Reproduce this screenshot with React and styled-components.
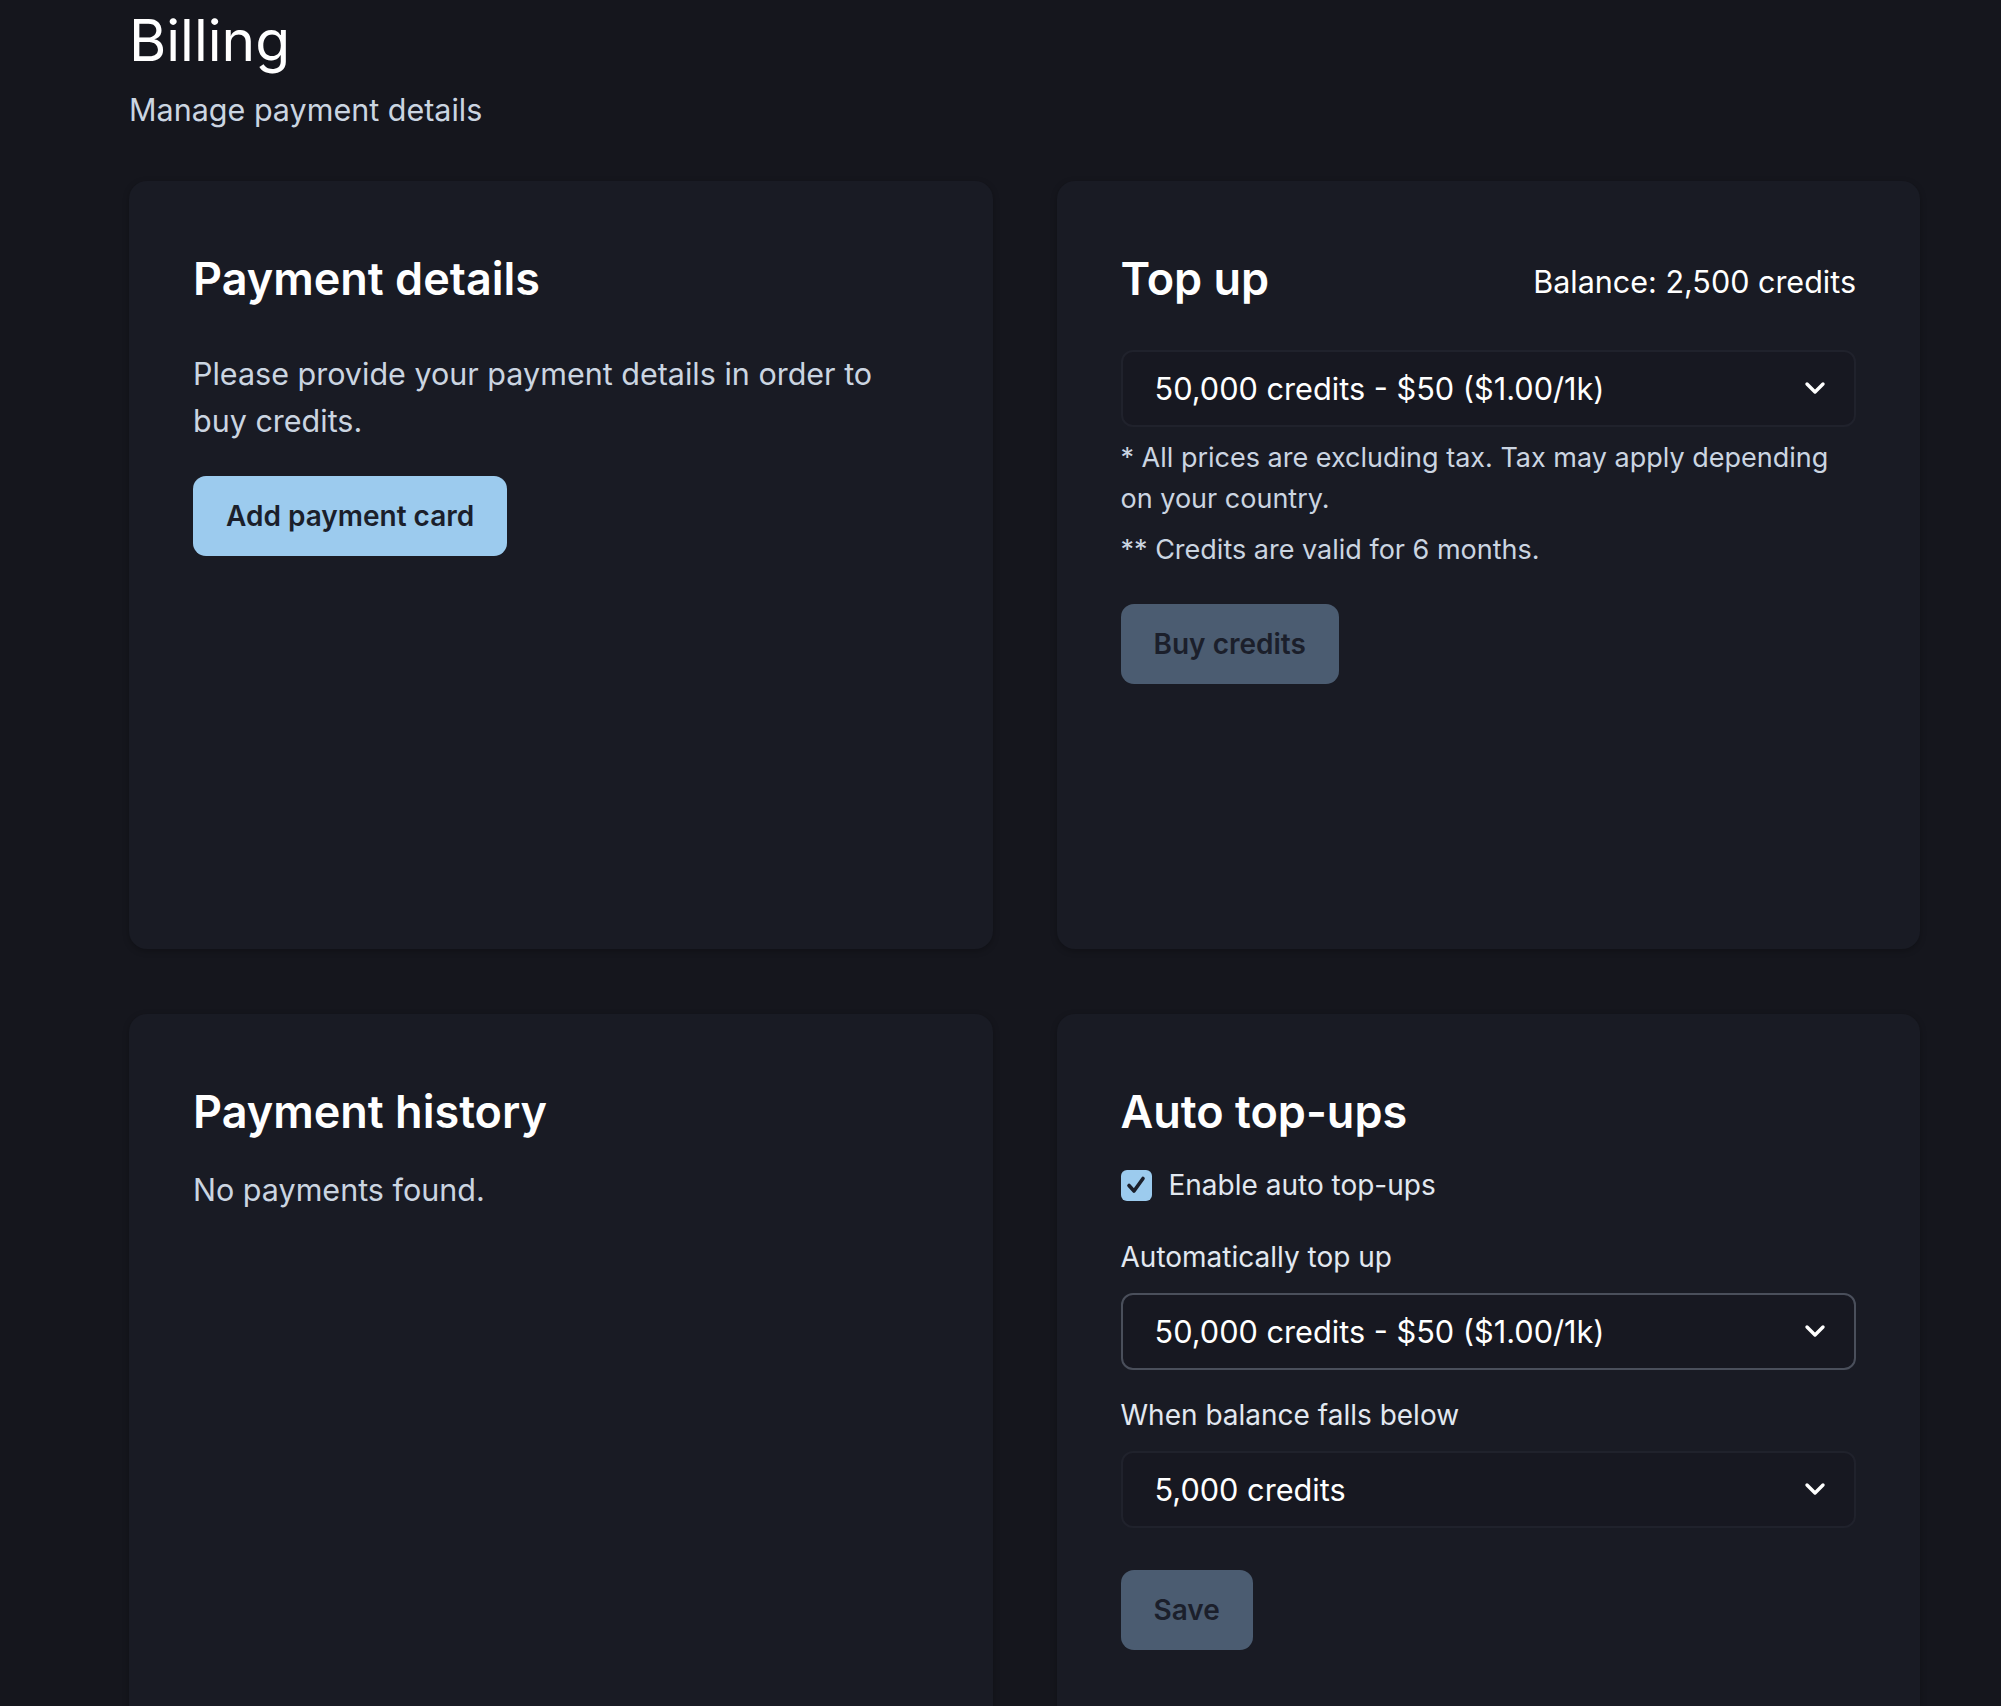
import React from 'react'
import styled, { createGlobalStyle } from 'styled-components'

const COLOR = {
  page: '#15161d',
  card: '#191b24',
  white: '#ffffff',
  text: '#cbd5e1',
  label: '#e2e8f0',
  primary: '#9ccbee',
  disabled: '#4b5c71',
  ink: '#1b1f2b',
}

const GlobalStyle = createGlobalStyle`
  html, body {
    margin: 0;
    background: ${COLOR.page};
    font-family: Inter, 'Noto Sans', sans-serif;
    -webkit-font-smoothing: antialiased;
  }
`

const Page = styled.div`
  padding: 12px 81px 0 129px;
`

const Title = styled.h1`
  margin: 0;
  color: ${COLOR.white};
  font-size: 57px;
  font-weight: 400;
  line-height: 58px;
`

const Subtitle = styled.p`
  margin: 18px 0 0;
  color: ${COLOR.text};
  font-size: 30.5px;
  line-height: 43px;
`

const Grid = styled.div`
  display: grid;
  grid-template-columns: 1fr 1fr;
  gap: 65px 64px;
  margin-top: 50px;
`

const Card = styled.section`
  background: ${COLOR.card};
  border-radius: 18px;
  padding: 64px;
  min-height: 768px;
  box-sizing: border-box;
  box-shadow: 0 2px 6px rgba(0, 0, 0, 0.25);
`

const CardHead = styled.div`
  display: flex;
  align-items: baseline;
  justify-content: space-between;
  margin-bottom: ${p => p.gap || 0}px;
`

const Heading = styled.h2`
  margin: 0;
  color: ${COLOR.white};
  font-size: 45px;
  font-weight: 600;
  line-height: 67.5px;
`

const Balance = styled.span`
  position: relative;
  top: -2px;
  color: ${COLOR.white};
  font-size: 30.5px;
  line-height: 40px;
`

const Text = styled.p`
  margin: 0;
  color: ${COLOR.text};
  font-size: 30.5px;
  line-height: 47px;
`

const Note = styled.p`
  margin: ${p => p.top || 0}px 0 0;
  color: ${COLOR.text};
  font-size: 27px;
  line-height: 41px;
`

const Button = styled.button`
  display: inline-flex;
  align-items: center;
  height: 80px;
  padding: 0 33px;
  margin-top: ${p => p.top || 0}px;
  border: none;
  border-radius: 13px;
  background: ${p => (p.disabled ? COLOR.disabled : COLOR.primary)};
  color: ${COLOR.ink};
  font-family: inherit;
  font-size: 28px;
  font-weight: 600;
  cursor: ${p => (p.disabled ? 'default' : 'pointer')};
`

const SelectBox = styled.div`
  display: flex;
  align-items: center;
  justify-content: space-between;
  height: 77px;
  box-sizing: border-box;
  padding: 0 28px 0 32px;
  border: 2px solid ${p => (p.active ? '#4a4f5b' : '#20222c')};
  border-radius: 12px;
  background: #171821;
  color: ${COLOR.white};
  font-size: 30.7px;
`

const Check = styled.label`
  display: flex;
  align-items: center;
  gap: 17px;
  margin-bottom: 31px;
  color: ${COLOR.label};
  font-size: 28px;
  line-height: 41px;
`

const Box = styled.span`
  display: flex;
  align-items: center;
  justify-content: center;
  width: 31px;
  height: 31px;
  border-radius: 6px;
  background: ${COLOR.primary};
`

const Label = styled.div`
  margin: ${p => p.top || 0}px 0 15px;
  color: ${COLOR.label};
  font-size: 28px;
  line-height: 41px;
`

const Chevron = () => (
  <svg width="22" height="14" viewBox="0 0 22 14" fill="none">
    <polyline points="3,3 11,11 19,3" stroke="#fff" strokeWidth="3.4" strokeLinecap="round" strokeLinejoin="round" />
  </svg>
)

const Select = ({ value, active }) => (
  <SelectBox active={active}>
    <span>{value}</span>
    <Chevron />
  </SelectBox>
)

const PACKAGE = '50,000 credits - $50 ($1.00/1k)'

export default function App() {
  return (
    <Page>
      <GlobalStyle />
      <Title>Billing</Title>
      <Subtitle>Manage payment details</Subtitle>
      <Grid>
        <Card>
          <CardHead gap={37}>
            <Heading>Payment details</Heading>
          </CardHead>
          <Text>Please provide your payment details in order to buy credits.</Text>
          <Button top={32}>Add payment card</Button>
        </Card>

        <Card>
          <CardHead gap={37}>
            <Heading>Top up</Heading>
            <Balance>Balance: 2,500 credits</Balance>
          </CardHead>
          <Select value={PACKAGE} />
          <Note top={10}>* All prices are excluding tax. Tax may apply depending on your country.</Note>
          <Note top={10}>** Credits are valid for 6 months.</Note>
          <Button disabled top={34}>Buy credits</Button>
        </Card>

        <Card>
          <CardHead gap={20}>
            <Heading>Payment history</Heading>
          </CardHead>
          <Text>No payments found.</Text>
        </Card>

        <Card>
          <CardHead gap={19}>
            <Heading>Auto top-ups</Heading>
          </CardHead>
          <Check>
            <Box>
              <svg width="22" height="22" viewBox="0 0 22 22" fill="none">
                <polyline points="4,11.5 9,17 18,4.5" stroke={COLOR.ink} strokeWidth="3.6" strokeLinecap="round" strokeLinejoin="round" />
              </svg>
            </Box>
            Enable auto top-ups
          </Check>
          <Label>Automatically top up</Label>
          <Select value={PACKAGE} active />
          <Label top={25}>When balance falls below</Label>
          <Select value="5,000 credits" />
          <Button disabled top={42}>Save</Button>
        </Card>
      </Grid>
    </Page>
  )
}
